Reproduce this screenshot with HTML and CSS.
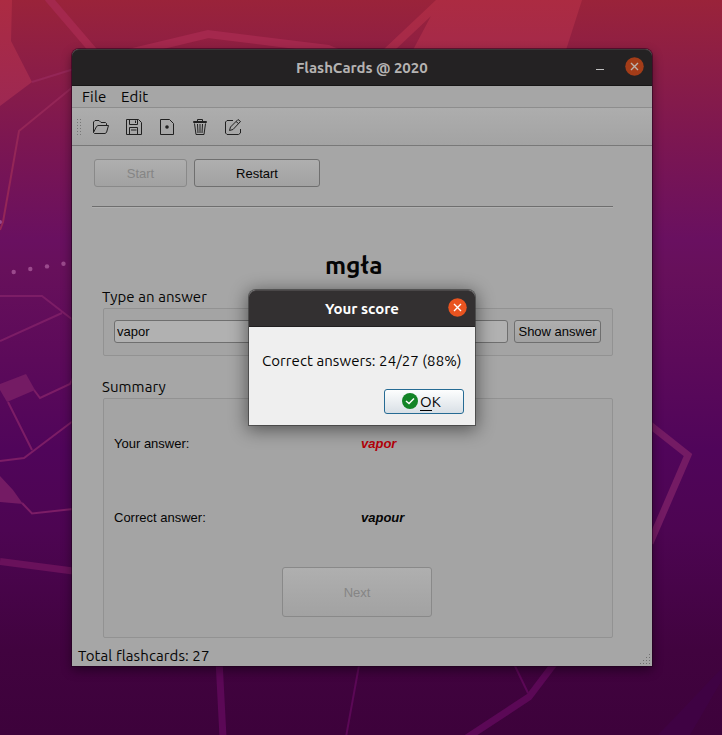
FILE: index.html
```html
<!DOCTYPE html>
<html lang="en">
<head>
<meta charset="utf-8">
<title>FlashCards @ 2020</title>
<link rel="stylesheet" href="styles.css">
</head>
<body>
<div class="desktop">
  <svg class="wallpaper" viewBox="0 0 722 735" aria-hidden="true">
    <defs>
      <linearGradient id="warm" x1="0" y1="0" x2="0" y2="110" gradientUnits="userSpaceOnUse"><stop offset="0" stop-color="#ac2b42"/><stop offset="1" stop-color="#9d2853"/></linearGradient>
    </defs>
    <path fill="url(#warm)" d="M0 0H12L11 41L32 82L0 106ZM436 0H582L566 50H413L431 16L395 50H383Z"/>
    <g fill="none" stroke="#a4284d">
      <path stroke-width="8" d="M48 -2L96 54M125 54L208 34L328 49L340 54"/>
      <path stroke-width="2" stroke="#942657" d="M32 82L74 69M74 86L19 131L3 222L0 230"/>
    </g>
    <g fill="none" stroke="#7c1d66" stroke-width="2">
      <path d="M0 296H42L73 320M0 341L62 313M34 390L40 398L70 384L73 378M8 402L32 450M0 461L24 458L73 421"/>
      <path stroke-width="2" d="M22 503L32 513.500L73 509"/>
      <path stroke="#69115b" stroke-width="7" d="M0 561.500L73 571"/>
      <path stroke="#741b64" stroke-width="7" d="M650 425L688 455L650 543"/>
      <path stroke="#5b0856" stroke-width="7" d="M219 660L223 737M557 660L529 697L462 741"/>
      <path stroke="#5b0856" stroke-width="2" d="M360 660L346 737M514 664L528 693"/>
    </g>
    <path fill="#741b64" d="M0 384L26 374L35 390L7 402L0 390ZM0 476L13 490L23 504L0 502Z"/>
    <path fill="#3f0243" d="M722 668L658 735H690L722 680Z"/>
    <g fill="#9b4a8d"><circle cx="13.700" cy="272" r="2.200"/><circle cx="30.300" cy="269" r="2.200"/><circle cx="47" cy="266.400" r="2.200"/><circle cx="63.500" cy="263.700" r="2.200"/><circle cx="0" cy="222" r="2"/></g>
  </svg>

  <main class="window">
    <header class="titlebar">
      <h1 class="window-title">FlashCards @ 2020</h1>
      <span class="minimise"></span>
      <svg class="close" viewBox="0 0 19 19"><circle cx="9.500" cy="9.500" r="9.250"/><path d="M6 6L13 13M13 6L6 13"/></svg>
    </header>
    <nav class="menubar"><span class="file">File</span><span class="edit">Edit</span></nav>
    <div class="toolbar">
      <span class="grip"></span>
      <svg class="tool" viewBox="0 0 18 18"><path d="M1.500 14.500V4L3 2.500H7L9 4.500H13.500L14.500 5.500V7M1.500 14.500L4.500 8.500L6 7.500H16.500L14.500 14.500L13 15.500H2.500L1.500 14.500"/></svg>
      <svg class="tool" viewBox="0 0 18 18"><path d="M1.500 1.500H13.500L16.500 4.500V16.500H1.500ZM4.500 1.500V6.500H12.500V1.500M10.500 2.500V5M4.500 16.500V9.500H12.500V16.500M6 12H11.500"/></svg>
      <svg class="tool" viewBox="0 0 18 18"><path d="M2.500 1.500H11.500L15.500 5.500V16.500H2.500Z"/><circle class="solid" cx="9" cy="9" r="1.800"/></svg>
      <svg class="tool" viewBox="0 0 18 18"><path d="M2.500 4.500V3.500H15.500V4.500ZM6.500 3V1.500H11.500V3M3.500 5.500L5 16.500H13L14.500 5.500M6.500 6L7 15M9 6V15M11.500 6L11 15"/></svg>
      <svg class="tool" viewBox="0 0 18 18"><path d="M9 2.500H3L1.500 4V15L3 16.500H14.500L16.500 15V11M5.500 12.500L6.500 9L14 1.500L16.500 3.500L9 11.500ZM12 3.500L14.500 5.500"/></svg>
    </div>
    <section class="content">
      <div class="actions"><button class="btn start" disabled>Start</button><button class="btn restart">Restart</button></div>
      <div class="rule"></div>
      <h2 class="word">mgła</h2>
      <div class="label">Type an answer</div>
      <div class="group entry">
        <input class="field" value="vapor" aria-label="Answer">
        <button class="btn show">Show answer</button>
      </div>
      <div class="label summary-label">Summary</div>
      <div class="group summary">
        <div class="row"><span>Your answer:</span><em class="wrong">vapor</em></div>
        <div class="row"><span>Correct answer:</span><em>vapour</em></div>
        <button class="btn next" disabled>Next</button>
      </div>
    </section>
    <footer class="status"><span>Total flashcards: 27</span>
      <svg class="resize" viewBox="0 0 11 11"><path d="M9 0h1v1h-1zM6 3h1v1h-1zM9 3h1v1h-1zM3 6h1v1h-1zM6 6h1v1h-1zM9 6h1v1h-1zM0 9h1v1h-1zM3 9h1v1h-1zM6 9h1v1h-1zM9 9h1v1h-1z"/></svg>
    </footer>
  </main>

  <div class="dialog" role="dialog">
    <header class="titlebar dialog-bar">
      <h2 class="dialog-title">Your score</h2>
      <svg class="close" viewBox="0 0 19 19"><circle cx="9.500" cy="9.500" r="9.250"/><path d="M6 6L13 13M13 6L6 13"/></svg>
    </header>
    <p class="score">Correct answers: 24/27 (88%)</p>
    <div class="dialog-actions"><button class="ok"><svg viewBox="0 0 16 16"><circle cx="8" cy="8" r="8"/><path d="M4 8L7 10.500L12 5.500"/></svg><span class="ok-text"><span class="mnemonic">O</span>K</span></button></div>
  </div>
</div>
</body>
</html>
```
FILE: styles.css
```css
* { box-sizing: border-box; }
body { margin: 0; font-family: "Liberation Sans", Arial, sans-serif; font-size: 13px; color: #050505; }
h1, h2, p { margin: 0; }
button, input { font: inherit; color: inherit; margin: 0; }

.desktop {
  position: relative;
  width: 722px;
  height: 735px;
  padding: 49px 70px 69px 72px;
  overflow: hidden;
  background: linear-gradient(#9a233a 0, #8d1e45 60px, #7b1652 145px, #691060 240px, #67105b 270px, #5c0a5a 360px, #50055a 450px, #4d0552 530px, #41033f 650px, #3d023b 735px);
}
.wallpaper { position: absolute; inset: 0; width: 722px; height: 735px; }

.window {
  position: relative;
  width: 580px;
  height: 617px;
  display: flex;
  flex-direction: column;
  background: #a6a6a6;
  border-radius: 7px 7px 0 0;
  box-shadow: 0 0 0 1px rgba(30, 0, 25, .5), 0 4px 11px rgba(0, 0, 0, .45);
}
.titlebar {
  height: 37px;
  flex: none;
  display: flex;
  align-items: center;
  background: #242223;
  border-top: 1px solid #393637;
  border-bottom: 1px solid #171616;
  border-radius: 7px 7px 0 0;
  font-family: Ubuntu, "Noto Sans", sans-serif;
}
.window-title { width: 132px; margin-left: 224px; font-size: 15px; line-height: 20px; font-weight: 700; color: #b5b3b2; white-space: nowrap; letter-spacing: -.06px; }
.minimise { width: 8px; height: 1px; background: #c0c0c0; margin: 4px 20.500px 0 168px; }
.close { width: 19px; height: 19px; flex: none; margin-top: -2px; }
.close circle { fill: #a33c18; }
.close path { fill: none; stroke: #bcb3ad; stroke-width: 1.4; }

.menubar { height: 22px; flex: none; display: flex; border-bottom: 1px solid #8d8d8d; padding-left: 10px; font: 15px/22px Ubuntu, "Noto Sans", sans-serif; letter-spacing: .2px; }
.file { width: 39px; }
.toolbar { height: 38px; flex: none; display: flex; align-items: center; gap: 15px; padding-left: 4px; background: linear-gradient(#adadad, #a3a3a3); border-bottom: 1px solid #787878; }
.grip { width: 6px; height: 17px; margin-right: -5px; background: radial-gradient(circle, #777 .6px, transparent .9px) 0 0 / 3px 3px; }
.tool { width: 18px; height: 18px; }
.tool path { fill: none; stroke: #202020; stroke-width: 1; }
.tool .solid { fill: #202020; }

.content { flex: 1; padding: 13px 39px 0 20px; }
.actions { display: flex; gap: 7px; padding-left: 2px; }
.btn { padding: 0; height: 28px; border: 1px solid #6f6f6f; border-radius: 3px; background: linear-gradient(#afafaf, #a2a2a2); text-align: center; white-space: nowrap; }
.btn:disabled { color: #858585; border-color: #898989; }
.start { width: 93px; }
.restart { width: 126px; }
.rule { height: 2px; margin-top: 19px; background: #6e6e6e; border-bottom: 1px solid #b0b0b0; }
.word { height: 79px; padding: 41px 0 0 233px; font: 700 24.500px/32px Ubuntu, "Noto Sans", sans-serif; }
.label { height: 21px; padding-left: 10px; font: 15px/20px Ubuntu, "Noto Sans", sans-serif; letter-spacing: .08px; }
.group { margin-left: 11px; border: 1px solid #929292; border-radius: 2px; background: #a4a4a4; }
.entry { height: 48px; display: flex; gap: 6px; padding: 11px 10px 0; }
.field { width: 394px; height: 23px; padding: 0 2px; border: 1px solid #6f6f6f; border-radius: 3px; background: #b1b1b1; outline: 0; }
.show { width: 87px; height: 23px; }
.summary-label { height: 42px; padding-top: 21px; }
.summary { height: 240px; padding: 35px 10px 0; }
.row { display: grid; grid-template-columns: 247px 1fr; height: 20px; line-height: 20px; margin-bottom: 54px; }
.row em { font-weight: 700; }
.row .wrong { color: #b40008; }
.next { display: block; width: 150px; height: 50px; margin: -15px 0 0 168px; }
.status { height: 20px; flex: none; display: flex; justify-content: space-between; padding-left: 6px; font: 15px/20px Ubuntu, "Noto Sans", sans-serif; letter-spacing: .1px; }
.resize { width: 11px; height: 11px; margin: 8px 1px 0 0; fill: #707070; }

.dialog {
  position: absolute;
  left: 249px;
  top: 290px;
  width: 226px;
  height: 135px;
  background: #efefef;
  border-radius: 7px 7px 0 0;
  box-shadow: 0 0 0 1px rgba(50, 50, 50, .6), 0 3px 18px 2px rgba(0, 0, 0, .48);
}
.dialog-bar { background: #333031; border-color: #4a4748; border-bottom-color: #211f20; }
.dialog-title { width: 74px; margin: 0 48.500px 0 76px; font-size: 15px; line-height: 20px; color: #fff; white-space: nowrap; }
.dialog .close circle { fill: #e95420; }
.dialog .close path { stroke: #fff; }
.score { height: 62px; padding: 23px 0 0 13px; font: 15px/22px Ubuntu, "Noto Sans", sans-serif; letter-spacing: .07px; white-space: nowrap; }
.dialog-actions { display: flex; justify-content: flex-end; padding-right: 11px; }
.ok { width: 80px; height: 25px; display: flex; align-items: center; gap: 2px; padding: 0 0 0 17px; border: 1px solid #266b94; border-radius: 3px; background: linear-gradient(#fdfefe, #d9e0e6); font: 15px/20px Ubuntu, "Noto Sans", sans-serif; }
.ok svg { width: 16px; height: 16px; margin-top: -1px; }
.ok circle { fill: #138427; }
.ok path { fill: none; stroke: #fff; stroke-width: 1.5; }
.mnemonic { border-bottom: 1px solid #000; }
```
